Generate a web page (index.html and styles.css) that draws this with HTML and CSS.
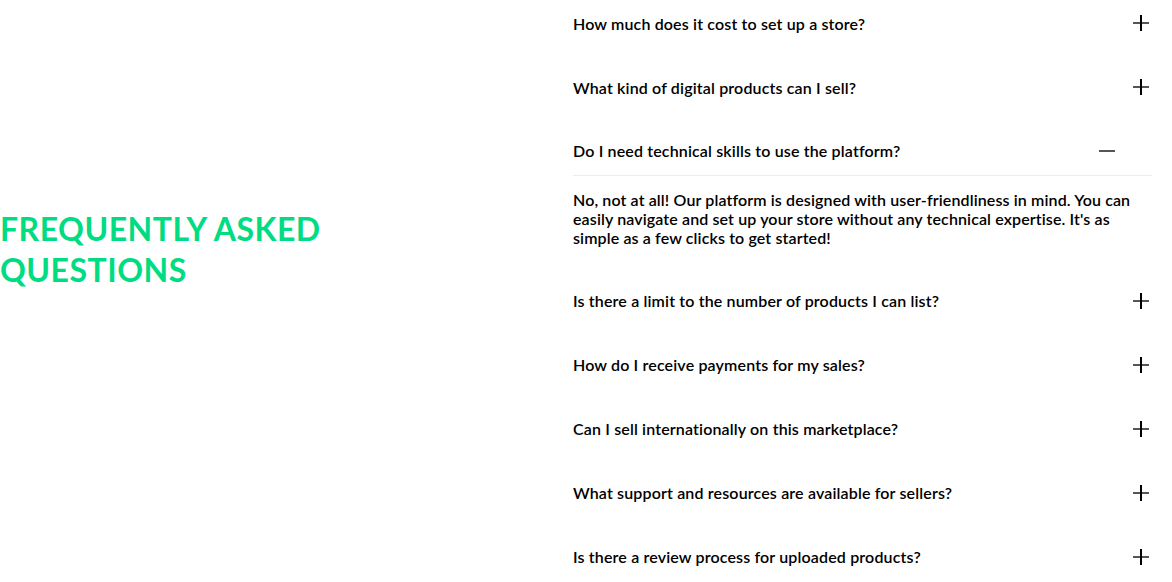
FILE: index.html
```html
<!DOCTYPE html>
<html lang="en">
<head>
<meta charset="utf-8">
<title>FAQ</title>
<link rel="stylesheet" href="styles.css">
</head>
<body>
<section class="faq">
  <div class="faq-intro">
    <h2 class="faq-title">FREQUENTLY ASKED<br>QUESTIONS</h2>
  </div>
  <div class="faq-list">
    <div class="faq-item">
      <button class="faq-q"><span>How much does it cost to set up a store?</span><i class="icon plus"></i></button>
    </div>
    <div class="faq-item">
      <button class="faq-q"><span>What kind of digital products can I sell?</span><i class="icon plus"></i></button>
    </div>
    <div class="faq-item open">
      <button class="faq-q"><span>Do I need technical skills to use the platform?</span><i class="icon minus"></i></button>
      <div class="faq-a">No, not at all! Our platform is designed with user-friendliness in mind. You can easily navigate and set up your store without any technical expertise. It's as simple as a few clicks to get started!</div>
    </div>
    <div class="faq-item">
      <button class="faq-q"><span>Is there a limit to the number of products I can list?</span><i class="icon plus"></i></button>
    </div>
    <div class="faq-item">
      <button class="faq-q"><span>How do I receive payments for my sales?</span><i class="icon plus"></i></button>
    </div>
    <div class="faq-item">
      <button class="faq-q"><span>Can I sell internationally on this marketplace?</span><i class="icon plus"></i></button>
    </div>
    <div class="faq-item">
      <button class="faq-q"><span>What support and resources are available for sellers?</span><i class="icon plus"></i></button>
    </div>
    <div class="faq-item">
      <button class="faq-q"><span>Is there a review process for uploaded products?</span><i class="icon plus"></i></button>
    </div>
  </div>
</section>
</body>
</html>
```
FILE: styles.css
```css
html, body {
  margin: 0;
  padding: 0;
  background: #fff;
  overflow: hidden;
}
body {
  font-family: "Lato", "Noto Sans", sans-serif;
  color: #000;
}
.faq {
  display: grid;
  grid-template-columns: 573px 579px;
  margin-top: -2px;
}
.faq-intro {
  padding-top: 210px;
}
.faq-title {
  margin: 0;
  font-size: 32px;
  line-height: 41px;
  font-weight: 700;
  color: #00dc82;
  letter-spacing: 0.5px;
}
.faq-list {
  display: flex;
  flex-direction: column;
  gap: 14px;
}
.faq-q {
  display: flex;
  align-items: center;
  justify-content: space-between;
  width: 100%;
  height: 50px;
  padding: 0;
  border: 0;
  background: none;
  font: inherit;
  font-size: 16px;
  font-weight: 600;
  letter-spacing: 0.15px;
  color: #000;
  text-align: left;
  cursor: pointer;
}
.faq-item.open .faq-q {
  border-bottom: 1px solid #ececec;
}
.faq-a {
  padding: 14px 0 14.5px 0;
  font-size: 16px;
  line-height: 19px;
  font-weight: 600;
  letter-spacing: 0.12px;
}
.icon {
  position: relative;
  width: 16px;
  height: 16px;
  margin-right: 3px;
  flex: none;
}
.icon::before {
  content: "";
  position: absolute;
  left: 0;
  right: 0;
  top: 7px;
  height: 2px;
  background: #555;
}
.plus::after {
  content: "";
  position: absolute;
  top: 0;
  bottom: 0;
  left: 7px;
  width: 1.5px;
  background: #000;
}
.minus {
  margin-right: 37px;
}
```
